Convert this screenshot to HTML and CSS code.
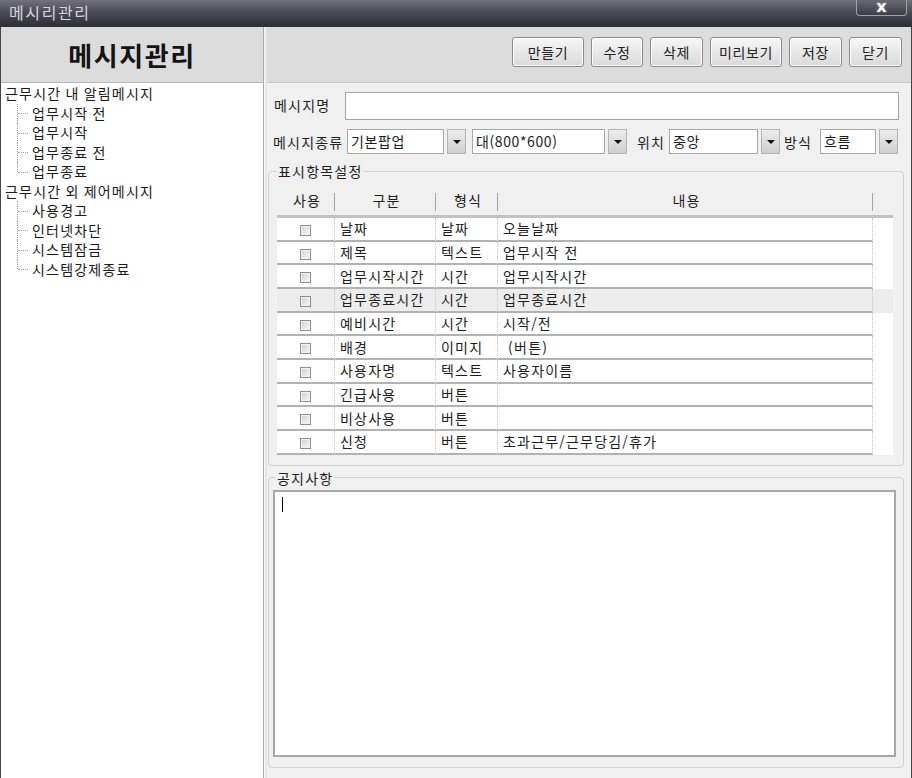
FILE: index.html
```html
<!DOCTYPE html>
<html lang="ko">
<head>
<meta charset="utf-8">
<title>메시리관리</title>
<link rel="stylesheet" href="styles.css">
</head>
<body>
<div class="window">
  <div class="titlebar">
    <span class="title">메시리관리</span>
    <span class="close">X</span>
  </div>
  <div class="main">
    <aside class="sidebar">
      <div class="side-header">메시지관리</div>
      <ul class="tree">
        <li><span class="node">근무시간 내 알림메시지</span>
          <ul class="children">
            <li>업무시작 전</li>
            <li>업무시작</li>
            <li>업무종료 전</li>
            <li>업무종료</li>
          </ul>
        </li>
        <li><span class="node">근무시간 외 제어메시지</span>
          <ul class="children">
            <li>사용경고</li>
            <li>인터넷차단</li>
            <li>시스템잠금</li>
            <li>시스템강제종료</li>
          </ul>
        </li>
      </ul>
    </aside>
    <div class="splitter"></div>
    <section class="content">
      <div class="toolbar">
        <button class="btn w72">만들기</button>
        <button class="btn w52">수정</button>
        <button class="btn w53">삭제</button>
        <button class="btn w72">미리보기</button>
        <button class="btn w53">저장</button>
        <button class="btn w53">닫기</button>
      </div>
      <div class="form">
        <div class="row row-name">
          <span class="lbl lbl-name">메시지명</span>
          <div class="input"></div>
        </div>
        <div class="row row-type">
          <span class="lbl lbl-type">메시지종류</span>
          <div class="select s1"><span class="sel-field">기본팝업</span><span class="sel-btn"><i class="tri"></i></span></div>
          <div class="select s2"><span class="sel-field">대(800*600)</span><span class="sel-btn"><i class="tri"></i></span></div>
          <span class="lbl lbl-pos">위치</span>
          <div class="select s3"><span class="sel-field">중앙</span><span class="sel-btn"><i class="tri"></i></span></div>
          <span class="lbl lbl-mode">방식</span>
          <div class="select s4"><span class="sel-field">흐름</span><span class="sel-btn"><i class="tri"></i></span></div>
        </div>

        <fieldset class="group group-items">
          <legend>표시항목설정</legend>
          <table class="grid">
            <colgroup>
              <col class="c-use"><col class="c-kind"><col class="c-type"><col class="c-content"><col class="c-fill">
            </colgroup>
            <thead>
              <tr><th class="sep">사용</th><th class="sep">구분</th><th class="sep">형식</th><th class="sep">내용</th><th></th></tr>
            </thead>
            <tbody>
              <tr><td class="ck"><span class="chk"></span></td><td>날짜</td><td>날짜</td><td>오늘날짜</td><td class="fill"></td></tr>
              <tr><td class="ck"><span class="chk"></span></td><td>제목</td><td>텍스트</td><td>업무시작 전</td><td class="fill"></td></tr>
              <tr><td class="ck"><span class="chk"></span></td><td>업무시작시간</td><td>시간</td><td>업무시작시간</td><td class="fill"></td></tr>
              <tr class="hl"><td class="ck"><span class="chk"></span></td><td>업무종료시간</td><td>시간</td><td>업무종료시간</td><td class="fill"></td></tr>
              <tr><td class="ck"><span class="chk"></span></td><td>예비시간</td><td>시간</td><td>시작/전</td><td class="fill"></td></tr>
              <tr><td class="ck"><span class="chk"></span></td><td>배경</td><td>이미지</td><td>&nbsp;(버튼)</td><td class="fill"></td></tr>
              <tr><td class="ck"><span class="chk"></span></td><td>사용자명</td><td>텍스트</td><td>사용자이름</td><td class="fill"></td></tr>
              <tr><td class="ck"><span class="chk"></span></td><td>긴급사용</td><td>버튼</td><td></td><td class="fill"></td></tr>
              <tr><td class="ck"><span class="chk"></span></td><td>비상사용</td><td>버튼</td><td></td><td class="fill"></td></tr>
              <tr><td class="ck"><span class="chk"></span></td><td>신청</td><td>버튼</td><td>초과근무/근무당김/휴가</td><td class="fill"></td></tr>
            </tbody>
          </table>
        </fieldset>

        <fieldset class="group group-notice">
          <legend>공지사항</legend>
          <div class="textarea"><span class="caret"></span></div>
        </fieldset>
      </div>
    </section>
  </div>
</div>
</body>
</html>
```

FILE: styles.css
```css
* { box-sizing: border-box; }
html, body { margin: 0; padding: 0; }
body {
  width: 912px;
  height: 778px;
  overflow: hidden;
  font-family: "Noto Sans CJK KR", "Noto Sans", sans-serif;
  font-size: 14px;
  color: #1c1c1c;
  background: #f0f0f0;
}
.window { height: 778px; display: flex; flex-direction: column; }

/* title bar */
.titlebar {
  height: 27px;
  flex: none;
  display: flex;
  justify-content: space-between;
  align-items: flex-start;
  background: linear-gradient(#72727c 0%, #4a4a54 45%, #2e2e37 100%);
}
.title {
  padding-left: 9px;
  color: #d6d6d6;
  font-size: 16px;
  letter-spacing: 1.6px;
  line-height: 24px;
}
.close {
  width: 51px;
  height: 16px;
  margin-right: 5px;
  border: 1px solid #a2a2a8;
  border-top: none;
  border-radius: 0 0 4px 4px;
  background: linear-gradient(#6a6a72, #3c3c44);
  color: #fff;
  font: bold 13px/15px "DejaVu Sans", sans-serif;
  text-align: center;
  text-shadow: 0 0 2px #c8c8d0;
}

.main {
  flex: 1;
  min-height: 0;
  display: flex;
  border-left: 1px solid #454545;
  border-right: 1px solid #454545;
}

/* sidebar */
.sidebar {
  width: 263px;
  flex: none;
  display: flex;
  flex-direction: column;
  background: #fff;
  border-right: 1px solid #a9a9a9;
}
.side-header {
  height: 56px;
  flex: none;
  display: flex;
  align-items: center;
  justify-content: center;
  padding-bottom: 1px;
  background: #dcdcdc;
  border-bottom: 1px solid #b8b8b8;
  font-size: 26px;
  font-weight: bold;
  letter-spacing: 1.6px;
  color: #141414;
}
.tree {
  list-style: none;
  margin: 0;
  padding: 1px 0 0 0;
  line-height: 19.5px;
  letter-spacing: 1.2px;
  word-spacing: -1px;
  color: #1a1a1a;
}
.node { padding-left: 4px; }
.children {
  list-style: none;
  margin: 0 0 0 16px;
  padding: 0;
}
.children li {
  position: relative;
  padding-left: 15px;
}
.children li::before {
  content: "";
  position: absolute;
  left: 0;
  top: 0;
  bottom: 0;
  border-left: 1px dotted #a4a4a4;
}
.children li:last-child::before { bottom: 50%; }
.children li::after {
  content: "";
  position: absolute;
  left: 1px;
  top: 50%;
  width: 10px;
  border-top: 1px dotted #a4a4a4;
}

.splitter {
  width: 3px;
  flex: none;
  background: #e6e6e6;
  border-left: 1px solid #f8f8f8;
}

/* content */
.content {
  flex: 1;
  display: flex;
  flex-direction: column;
  background: #f0f0f0;
}
.toolbar {
  height: 56px;
  flex: none;
  display: flex;
  justify-content: flex-end;
  align-items: flex-start;
  gap: 7px;
  padding: 10px 9px 0 0;
  background: #dcdcdc;
  border-bottom: 1px solid #c6c6c6;
}
.btn {
  height: 30px;
  padding: 0;
  border: 1px solid #8c8c8c;
  border-radius: 3px;
  background: linear-gradient(#f7f7f7, #e8e8e8 50%, #d9d9d9);
  box-shadow: inset 0 0 0 1px #fbfbfb;
  font-family: inherit;
  font-size: 14px;
  letter-spacing: 0.6px;
  color: #222;
}
.w72 { width: 72px; }
.w52 { width: 52px; }
.w53 { width: 53px; }

.form {
  flex: 1;
  min-height: 0;
  display: flex;
  flex-direction: column;
  padding: 9px 7px 10px 1px;
}
.row { display: flex; align-items: center; }
.lbl { letter-spacing: 1.2px; color: #1e1e1e; white-space: nowrap; }
.row-name { height: 28px; padding: 0 5px 0 6px; }
.lbl-name { width: 71px; flex: none; margin-top: -3px; }
.input {
  flex: 1;
  height: 28px;
  background: #fff;
  border: 1px solid #a4a4a4;
}
.row-type { height: 25px; margin-top: 9px; padding: 0 5px 0 5px; }
.lbl-type { width: 74px; flex: none; }
.lbl-pos { width: 32px; flex: none; }
.lbl-mode { width: 36px; flex: none; }
.select { display: flex; gap: 3px; height: 25px; flex: none; }
.s1 { width: 119px; margin-right: 6px; }
.s2 { width: 155px; margin-right: 10px; }
.s3 { width: 111px; margin-right: 4px; }
.s4 { width: 78px; }
.sel-field {
  flex: 1;
  min-width: 0;
  background: #fff;
  border: 1px solid #a8a8a8;
  padding-left: 3px;
  line-height: 23px;
  letter-spacing: 0.6px;
  white-space: nowrap;
  overflow: hidden;
}
.sel-btn {
  width: 19px;
  flex: none;
  display: flex;
  align-items: center;
  justify-content: center;
  border: 1px solid #b4b4b4;
  background: linear-gradient(#ededed, #cecece);
}
.tri {
  width: 0;
  height: 0;
  border-left: 4px solid transparent;
  border-right: 4px solid transparent;
  border-top: 4px solid #111;
}

/* group boxes */
.group {
  margin: 9px 0 0 0;
  border: 1px solid #d2d2d2;
  border-radius: 4px;
  min-width: 0;
}
.group legend {
  padding: 0 1px;
  font-size: 14px;
  line-height: 16px;
  letter-spacing: 1.2px;
  color: #1e1e1e;
}
.group-items { padding: 9px 9px 10px 8px; }
.group-notice {
  flex: 1;
  min-height: 0;
  margin-top: 4px;
  padding: 4px 7px 10px 4px;
  display: flex;
  flex-direction: column;
}
.group-notice legend { margin-left: 3px; }

.grid {
  width: 616px;
  table-layout: fixed;
  border-collapse: separate;
  border-spacing: 0;
  background: #fff;
}
.c-use { width: 58px; }
.c-kind { width: 101px; }
.c-type { width: 62px; }
.c-content { width: 375px; }
.c-fill { width: 20px; }
.grid th {
  height: 30px;
  padding: 0 0 4px 2px;
  background: #f0f0f0;
  border-bottom: 3px solid #c2c2c2;
  font-weight: normal;
  letter-spacing: 1.2px;
  color: #1e1e1e;
  position: relative;
}
.grid th.sep::after {
  content: "";
  position: absolute;
  right: 0;
  top: 5px;
  bottom: 4px;
  width: 1px;
  background: #a6a6a6;
}
.grid td {
  height: 23.67px;
  padding: 0 0 1px 5px;
  border-bottom: 2px solid #b2b2b2;
  border-right: 1px dotted #c4c4c4;
  letter-spacing: 1.2px;
  white-space: nowrap;
  overflow: hidden;
  color: #1e1e1e;
}
.grid td.ck { padding: 0 0 1px 0; text-align: center; }
.grid td.fill { border: none; }
.grid tr.hl td { background: #ececec; }
.chk {
  display: inline-block;
  width: 11px;
  height: 11px;
  vertical-align: middle;
  border: 1px solid #8e8e8e;
  background: linear-gradient(135deg, #cfcfcf, #f8f8f8);
  box-shadow: inset 0 0 0 1px #f2f2f2;
}

.textarea {
  flex: 1;
  background: #fff;
  border: 2px solid #a8a8a8;
}
.caret {
  display: block;
  width: 1px;
  height: 15px;
  margin: 5px 0 0 7px;
  background: #000;
}
```
